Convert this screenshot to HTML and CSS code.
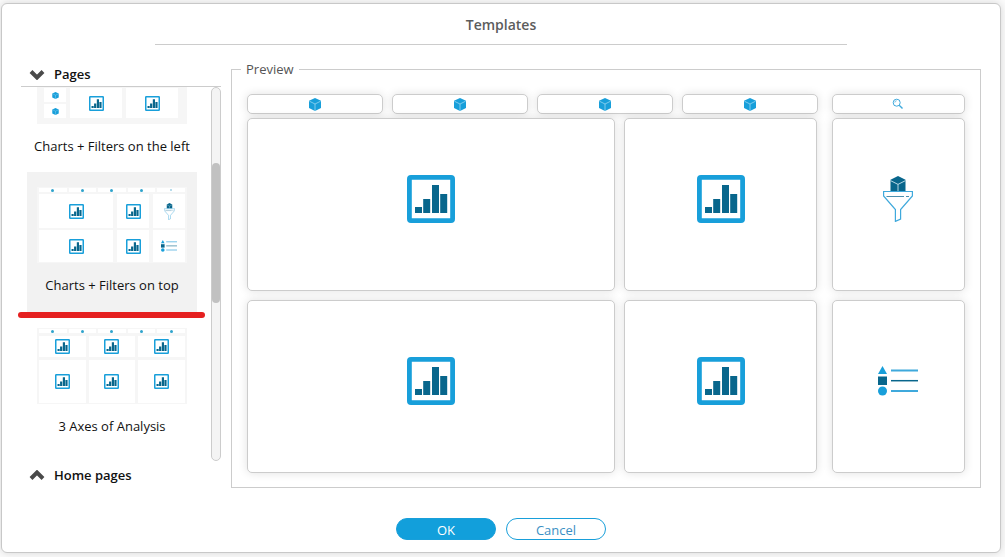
FILE: index.html
```
<!DOCTYPE html>
<html lang="en">
<head>
    <meta charset="UTF-8">
    <meta name="viewport" content="width=device-width, initial-scale=1.0">
    <title>Templates</title>
    <link rel="stylesheet" href="styles.css">
</head>
<body>

<!-- Shared icons -->
<svg class="icon-defs" aria-hidden="true">
    <symbol id="chart" viewBox="0 0 48 48">
        <rect x="2.4" y="2.4" width="43.2" height="43.2" rx="1.6" fill="#fff" stroke="#189fda" stroke-width="4.8"/>
        <path d="M8 32h7v6H8zM16.2 24h7v14h-7zM25 10h7v28h-7zM33.2 19h7v19h-7z" fill="#08668c"/>
    </symbol>
    <symbol id="cube" viewBox="0 0 12 13">
        <path d="M6 0l6 2.8v7.2L6 13 0 10V2.8z" fill="currentColor"/>
        <path d="M.4 3.2L6 6l5.600-2.800M6 6v7" fill="none" stroke="#a9def5" stroke-width=".7"/>
    </symbol>
    <symbol id="search" viewBox="0 0 12 12">
        <circle cx="4.700" cy="4.700" r="3.500" fill="none" stroke="#3fa9dc" stroke-width="1"/>
        <path d="M2.800 4.600a2 2 0 0 1 1.900-1.900" fill="none" stroke="#3fa9dc" stroke-width=".7"/>
        <path d="M7.200 7.200l3.300 3.300" stroke="#3fa9dc" stroke-width="1.400"/>
    </symbol>
    <symbol id="funnel" viewBox="0 0 30 46">
        <path d="M15 0l7.500 3.800V15h-15V3.800z" fill="#08668c"/>
        <path d="M7.500 4.600L15 8.400l7.500-3.800M15 8.400V15" fill="none" stroke="#c9e4ee" stroke-width=".9"/>
        <path d="M.6 15.500h28.800v4.500L17.600 33.500V43l-5.200 2.400V33.500L.6 20z" fill="#fff" stroke="#3fa9dc" stroke-width="1.200"/>
        <path d="M3.500 20.500H21M23 20.500h3" stroke="#4d8fae" stroke-width="1.200"/>
    </symbol>
    <symbol id="list" viewBox="0 0 40 30">
        <path d="M4.500 0L9 8H0z" fill="#189fda"/>
        <rect y="10.500" width="9" height="8.500" fill="#08668c"/>
        <circle cx="4.500" cy="25" r="4.500" fill="#189fda"/>
        <path d="M13 4.500h27M13 25h27" stroke="#3fa9dc" stroke-width="1.800"/>
        <path d="M13 14.700h27" stroke="#08668c" stroke-width="1.500"/>
    </symbol>
    <symbol id="chevron" viewBox="0 0 16 11">
        <path d="M2 2.500l6 6 6-6" fill="none" stroke="#4a4a4a" stroke-width="4"/>
    </symbol>
</svg>

<div class="dialog" role="dialog" aria-labelledby="dialog-title">
    <h1 class="dialog-title" id="dialog-title">Templates</h1>

    <div class="dialog-body">
        <div class="sidebar">
            <button class="section" type="button" aria-expanded="true">
                <svg class="chevron"><use href="#chevron"/></svg>Pages
            </button>

            <div class="page-list">
                <div class="pages">
                    <button class="page" type="button">
                        <span class="thumb thumb-left">
                            <span class="cell"><svg class="mini-cube"><use href="#cube"/></svg></span>
                            <span class="cell tall"><svg class="mini-chart"><use href="#chart"/></svg></span>
                            <span class="cell tall"><svg class="mini-chart"><use href="#chart"/></svg></span>
                            <span class="cell"><svg class="mini-cube"><use href="#cube"/></svg></span>
                            <span class="cell"><svg class="mini-cube"><use href="#cube"/></svg></span>
                            <span class="cell tall"><svg class="mini-chart"><use href="#chart"/></svg></span>
                            <span class="cell tall"><svg class="mini-chart"><use href="#chart"/></svg></span>
                            <span class="cell"><svg class="mini-cube"><use href="#cube"/></svg></span>
                        </span>
                        <span class="page-name">Charts + Filters on the left</span>
                    </button>

                    <button class="page selected" type="button">
                        <span class="thumb thumb-top">
                            <span class="thumb-filters">
                                <span class="cell"><i class="dot"></i></span>
                                <span class="cell"><i class="dot"></i></span>
                                <span class="cell"><i class="dot"></i></span>
                                <span class="cell"><i class="dot"></i></span>
                                <span class="cell"><i class="dot faint"></i></span>
                            </span>
                            <span class="thumb-grid">
                                <span class="cell"><svg class="mini-chart"><use href="#chart"/></svg></span>
                                <span class="cell"><svg class="mini-chart"><use href="#chart"/></svg></span>
                                <span class="cell"><svg class="mini-funnel"><use href="#funnel"/></svg></span>
                                <span class="cell"><svg class="mini-chart"><use href="#chart"/></svg></span>
                                <span class="cell"><svg class="mini-chart"><use href="#chart"/></svg></span>
                                <span class="cell"><svg class="mini-list"><use href="#list"/></svg></span>
                            </span>
                        </span>
                        <span class="page-name">Charts + Filters on top</span>
                    </button>

                    <button class="page" type="button">
                        <span class="thumb thumb-axes">
                            <span class="thumb-filters">
                                <span class="cell"><i class="dot"></i></span>
                                <span class="cell"><i class="dot"></i></span>
                                <span class="cell"><i class="dot"></i></span>
                                <span class="cell"><i class="dot"></i></span>
                                <span class="cell"><i class="dot"></i></span>
                            </span>
                            <span class="thumb-grid">
                                <span class="cell"><svg class="mini-chart"><use href="#chart"/></svg></span>
                                <span class="cell"><svg class="mini-chart"><use href="#chart"/></svg></span>
                                <span class="cell"><svg class="mini-chart"><use href="#chart"/></svg></span>
                                <span class="cell"><svg class="mini-chart"><use href="#chart"/></svg></span>
                                <span class="cell"><svg class="mini-chart"><use href="#chart"/></svg></span>
                                <span class="cell"><svg class="mini-chart"><use href="#chart"/></svg></span>
                            </span>
                        </span>
                        <span class="page-name">3 Axes of Analysis</span>
                    </button>
                </div>
                <div class="scrollbar"><div class="scroll-thumb"></div></div>
                <div class="marker"></div>
            </div>

            <button class="section" type="button" aria-expanded="false">
                <svg class="chevron up"><use href="#chevron"/></svg>Home pages
            </button>
        </div>

        <fieldset class="preview">
            <legend>Preview</legend>
            <div class="preview-grid">
                <div class="filters">
                    <div class="card"><svg class="cube"><use href="#cube"/></svg></div>
                    <div class="card"><svg class="cube"><use href="#cube"/></svg></div>
                    <div class="card"><svg class="cube"><use href="#cube"/></svg></div>
                    <div class="card"><svg class="cube"><use href="#cube"/></svg></div>
                </div>
                <div class="card"><svg class="search"><use href="#search"/></svg></div>

                <div class="charts">
                    <div class="card"><svg class="chart"><use href="#chart"/></svg></div>
                    <div class="card"><svg class="chart"><use href="#chart"/></svg></div>
                    <div class="card"><svg class="chart"><use href="#chart"/></svg></div>
                    <div class="card"><svg class="chart"><use href="#chart"/></svg></div>
                </div>
                <div class="tools">
                    <div class="card"><svg class="funnel"><use href="#funnel"/></svg></div>
                    <div class="card"><svg class="list"><use href="#list"/></svg></div>
                </div>
            </div>
        </fieldset>
    </div>

    <div class="dialog-footer">
        <button class="btn btn-ok" type="button">OK</button>
        <button class="btn btn-cancel" type="button">Cancel</button>
    </div>
</div>

</body>
</html>
```
FILE: styles.css
```
* {
    box-sizing: border-box;
}
body {
    display: flex;
    min-height: 100vh;
    margin: 0;
    padding: 3px 4px 4px 1px;
    background-color: #fbfbfb;
    font-family: "Open Sans", sans-serif;
    font-size: 13px;
    line-height: 18px;
    color: #111;
}
button {
    padding: 0;
    border: none;
    background: none;
    font: inherit;
    color: inherit;
    cursor: pointer;
}
svg {
    display: block;
    flex: none;
}
.icon-defs {
    position: absolute;
    width: 0;
    height: 0;
}

/* Dialog */
.dialog {
    flex: 1;
    display: flex;
    flex-direction: column;
    min-width: 0;
    padding: 0 19px 12px;
    background-color: #fff;
    border: 1px solid #c8c8c8;
    border-radius: 6px;
    box-shadow: 0 0 8px rgba(0, 0, 0, 0.15);
}
.dialog-title {
    margin: 0 134px;
    padding: 11px 0 9px;
    border-bottom: 1px solid #ccc;
    text-align: center;
    font-size: 14px;
    font-weight: 600;
    line-height: 20px;
    color: #5c5c5c;
}
.dialog-body {
    flex: 1;
    display: flex;
    gap: 10px;
    padding-top: 15px;
}
.dialog-footer {
    display: flex;
    justify-content: center;
    gap: 10px;
    padding-top: 30px;
}
.btn {
    width: 100px;
    height: 22px;
    padding-top: 2px;
    border: 1px solid #189fda;
    border-radius: 11px;
    line-height: 18px;
}
.btn-ok {
    background-color: #129fdb;
    color: #fff;
}
.btn-cancel {
    background-color: #fff;
    color: #3b8fc4;
}

/* Sidebar */
.sidebar {
    flex: none;
    display: flex;
    flex-direction: column;
    width: 200px;
    padding-bottom: 1px;
}
.section {
    display: flex;
    align-items: center;
    gap: 9px;
    height: 26px;
    padding: 2px 0 0 8px;
    font-weight: 600;
}
.chevron {
    width: 16px;
    height: 11px;
}
.chevron.up {
    transform: rotate(180deg);
}
.page-list {
    position: relative;
    flex: 1;
    display: flex;
    justify-content: space-between;
    min-height: 0;
    border-top: 1px solid #ccc;
}
.pages {
    display: flex;
    flex-direction: column;
    justify-content: flex-end;
    height: 374px;
    margin-left: 6px;
    padding-bottom: 9px;
    overflow: hidden;
}
.page {
    flex: none;
    display: flex;
    flex-direction: column;
    align-items: center;
    gap: 13px;
    width: 170px;
    height: 140px;
    padding-top: 16px;
}
.page.selected {
    padding-top: 15px;
    background-color: #f2f2f2;
}
.scrollbar {
    width: 10px;
    padding-top: 75px;
    border: 1px solid #ccc;
    border-radius: 5px;
    background-color: #f4f4f4;
}
.scroll-thumb {
    height: 140px;
    border-radius: 4px;
    background-color: #c1c1c1;
}
.marker {
    position: absolute;
    top: 225px;
    left: -3px;
    width: 187px;
    height: 6px;
    border-radius: 3px;
    background-color: #e52020;
}

/* Page thumbnails */
.thumb {
    display: flex;
    flex-direction: column;
    gap: 3px;
    width: 150px;
    height: 76px;
    padding: 1px 2px;
    background-color: #f6f6f6;
}
.cell {
    display: flex;
    align-items: center;
    justify-content: center;
    background-color: #fff;
}
.thumb-filters {
    display: grid;
    grid-template-columns: repeat(5, 1fr);
    gap: 2px;
    height: 4px;
}
.thumb-grid {
    flex: 1;
    display: grid;
    gap: 3px;
}
.thumb-top {
    gap: 2px;
}
.thumb-top .thumb-grid {
    grid-template-columns: 74fr 32fr 32fr;
    gap: 2px 4px;
}
.thumb-axes .thumb-grid {
    grid-template-columns: repeat(3, 1fr);
    grid-template-rows: 1fr 2fr;
}
.thumb-left {
    display: grid;
    grid-template-columns: 22px 52px 52px;
    grid-template-rows: repeat(4, 14px);
    gap: 2px 4px;
    justify-content: center;
    padding: 8px 2px 6px 0;
}
.tall {
    grid-row: span 2;
}
.dot {
    width: 3px;
    height: 3px;
    border-radius: 2px;
    background-color: #2fa3cc;
}
.dot.faint {
    width: 2px;
    height: 2px;
    background-color: #9fd0e6;
}
.mini-chart {
    width: 15px;
    height: 15px;
}
.mini-cube {
    width: 7px;
    height: 7px;
    color: #189fda;
}
.mini-funnel {
    width: 11px;
    height: 17px;
}
.mini-list {
    width: 16px;
    height: 12px;
}

/* Preview */
.preview {
    flex: 1;
    display: flex;
    flex-direction: column;
    min-width: 0;
    margin: 0;
    padding: 16px 9px 14px;
    border: 1px solid #ccc;
}
.preview legend {
    padding: 0 5px;
    color: #555;
}
.preview-grid {
    flex: 1;
    display: grid;
    grid-template-columns: 571fr 133fr;
    grid-template-rows: 20px 1fr;
    gap: 4px 14px;
    padding: 0 6px;
}
.filters {
    display: grid;
    grid-template-columns: repeat(4, 1fr);
    gap: 9px;
}
.charts {
    display: grid;
    grid-template-columns: 368fr 193fr;
    grid-template-rows: 1fr 1fr;
    gap: 9px;
    padding-right: 1px;
}
.tools {
    display: grid;
    grid-template-rows: 1fr 1fr;
    gap: 9px;
}
.card {
    display: flex;
    align-items: center;
    justify-content: center;
    padding-bottom: 12px;
    background-color: #fff;
    border: 1px solid #ccc;
    border-radius: 5px;
    box-shadow: 0 0 10px rgba(0, 0, 0, 0.12);
}
.filters .card,
.preview-grid > .card {
    padding-bottom: 0;
}
.tools .card,
.preview-grid > .card {
    padding-right: 2px;
}
.chart {
    width: 48px;
    height: 48px;
}
.cube {
    width: 12px;
    height: 13px;
    color: #189fda;
}
.search {
    width: 12px;
    height: 12px;
}
.funnel {
    width: 30px;
    height: 46px;
}
.list {
    width: 40px;
    height: 30px;
}
```
